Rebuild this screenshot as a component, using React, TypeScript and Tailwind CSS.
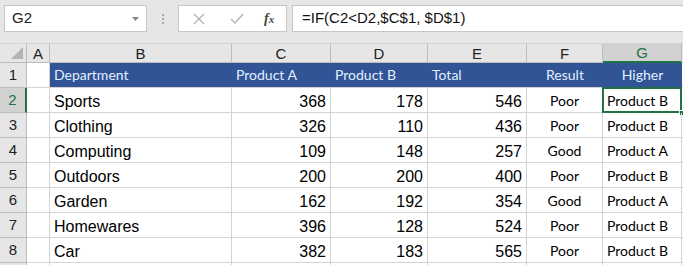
import React from "react";

const rows = [
  ["Sports", "368", "178", "546", "Poor", "Product B"],
  ["Clothing", "326", "110", "436", "Poor", "Product B"],
  ["Computing", "109", "148", "257", "Good", "Product A"],
  ["Outdoors", "200", "200", "400", "Poor", "Product B"],
  ["Garden", "162", "192", "354", "Good", "Product A"],
  ["Homewares", "396", "128", "524", "Poor", "Product B"],
  ["Car", "382", "183", "565", "Poor", "Product B"],
];

const cols = ["A", "B", "C", "D", "E", "F", "G"];

const arial = "font-['Liberation_Sans',Arial,sans-serif]";
const calibri = "font-['Lato','Open_Sans',sans-serif]";

const grid =
  "grid grid-cols-[27px_23px_182px_99px_97px_99px_76px_79px_1fr]";

const App = () => {
  return (
    <main className={`w-[683px] h-[265px] overflow-hidden bg-white ${arial}`}>
      {/* formula bar */}
      <section className="h-[43px] bg-[#e6e6e6] flex items-start pt-[5px] pl-[4px] gap-0">
        <div className="w-[143px] h-[27px] bg-white border border-[#c6c6c6] flex items-center justify-between pl-[7px] pr-[7px] text-[15px] text-[#222]">
          <span>G2</span>
          <svg width="7" height="4" viewBox="0 0 7 4">
            <path d="M0 0 L7 0 L3.5 4 Z" fill="#888" />
          </svg>
        </div>
        <div className="w-[31px] h-[27px] flex flex-col items-center justify-center gap-[2px]">
          <span className="w-[2px] h-[2px] bg-[#aaa]" />
          <span className="w-[2px] h-[2px] bg-[#aaa]" />
          <span className="w-[2px] h-[2px] bg-[#aaa]" />
        </div>
        <div className="w-[109px] h-[27px] bg-white border border-[#c6c6c6] flex items-center">
          <svg className="ml-[14px]" width="12" height="12" viewBox="0 0 12 12">
            <path d="M1 1 L11 11 M11 1 L1 11" stroke="#b4b4b4" strokeWidth="1.3" fill="none" />
          </svg>
          <svg className="ml-[25px]" width="14" height="11" viewBox="0 0 14 11">
            <path d="M1 6 L5 10 L13 1" stroke="#b4b4b4" strokeWidth="1.4" fill="none" />
          </svg>
          <span className="ml-[20px] font-['Liberation_Serif',serif] italic font-bold text-[14px] text-[#444] leading-none">
            f<span className="text-[11px]">x</span>
          </span>
        </div>
        <div className="ml-[5px] flex-1 h-[27px] bg-white border border-[#c6c6c6] border-r-0 flex items-center pl-[9px] text-[15px] text-[#111]">
          =IF(C2&lt;D2,$C$1, $D$1)
        </div>
      </section>

      {/* column headers */}
      <section className={`${grid} h-[20px] bg-[#e6e6e6] border-t border-[#d4d4d4]`}>
        <div className="relative border-r border-b border-[#bdbdbd]">
          <svg className="absolute right-[3px] bottom-[3px]" width="12" height="12" viewBox="0 0 12 12">
            <path d="M12 0 L12 12 L0 12 Z" fill="#b4b4b4" />
          </svg>
        </div>
        {cols.map((c) => (
          <div
            key={c}
            className={
              c === "G"
                ? "bg-[#d2d2d2] border-r border-[#bdbdbd] border-b-2 border-b-[#217346] flex items-center justify-center text-[15px] text-[#217346] leading-none"
                : "border-r border-b border-[#bdbdbd] flex items-center justify-center text-[15px] text-[#222] leading-none"
            }
          >
            {c}
          </div>
        ))}
        <div className="border-b border-[#bdbdbd]" />
      </section>

      {/* header row 1 */}
      <section className={`${grid} h-[25px]`}>
        <div className="bg-[#e6e6e6] border-r border-b border-[#bdbdbd] flex items-end justify-center pb-[2px] text-[15px] text-[#222] leading-5">
          1
        </div>
        <div className="border-r border-b border-[#d4d4d4]" />
        <div className={`col-span-6 bg-[#305496] grid grid-cols-[182px_99px_97px_99px_76px_79px] border-b border-[#d4d4d4] text-[14px] text-[#e2efff] ${calibri}`}>
          <div className="flex items-end pl-[4px] pb-[2px] leading-5">Department</div>
          <div className="flex items-end pl-[4px] pb-[2px] leading-5">Product A</div>
          <div className="flex items-end pl-[4px] pb-[2px] leading-5">Product B</div>
          <div className="flex items-end pl-[4px] pb-[2px] leading-5">Total</div>
          <div className="flex items-end justify-center pb-[2px] leading-5">Result</div>
          <div className="flex items-end justify-center pb-[2px] leading-5">Higher</div>
        </div>
        <div className="border-b border-[#d4d4d4]" />
      </section>

      {rows.map((r, i) => {
        const active = i === 0;
        return (
          <section key={r[0]} className={`${grid} h-[25px]`}>
            <div
              className={
                active
                  ? "bg-[#d2d2d2] border-r-2 border-r-[#217346] border-b border-[#bdbdbd] flex items-end justify-center pb-[2px] text-[15px] text-[#217346] leading-5"
                  : "bg-[#e6e6e6] border-r border-b border-[#bdbdbd] flex items-end justify-center pb-[2px] text-[15px] text-[#222] leading-5"
              }
            >
              {i + 2}
            </div>
            <div className="border-r border-b border-[#d4d4d4]" />
            <div className="border-r border-b border-[#d4d4d4] flex items-end pl-[4px] text-[16px] text-black leading-5">
              {r[0]}
            </div>
            {[r[1], r[2], r[3]].map((n, j) => (
              <div
                key={j}
                className="border-r border-b border-[#d4d4d4] flex items-end justify-end pr-[4px] text-[16px] text-black leading-5"
              >
                {n}
              </div>
            ))}
            <div className={`border-r border-b border-[#d4d4d4] flex items-end justify-center pb-[1px] text-[14px] text-black leading-5 ${calibri}`}>
              {r[4]}
            </div>
            <div className={`relative border-r border-b border-[#d4d4d4] flex items-end pl-[4px] pb-[1px] text-[14px] text-black leading-5 ${calibri}`}>
              {r[5]}
              {active && (
                <>
                  <div className="absolute -left-px -top-px -right-px -bottom-px border-2 border-[#217346]" />
                  <div className="absolute -right-[4px] -bottom-[4px] w-[6px] h-[6px] bg-[#217346] border border-white" />
                </>
              )}
            </div>
            <div className="border-b border-[#d4d4d4]" />
          </section>
        );
      })}
      <section className={`${grid} h-[25px]`}>
        <div className="bg-[#e6e6e6] border-r border-[#bdbdbd]" />
        {cols.map((c) => (
          <div key={c} className="border-r border-[#d4d4d4]" />
        ))}
        <div />
      </section>
    </main>
  );
};

export default App;
